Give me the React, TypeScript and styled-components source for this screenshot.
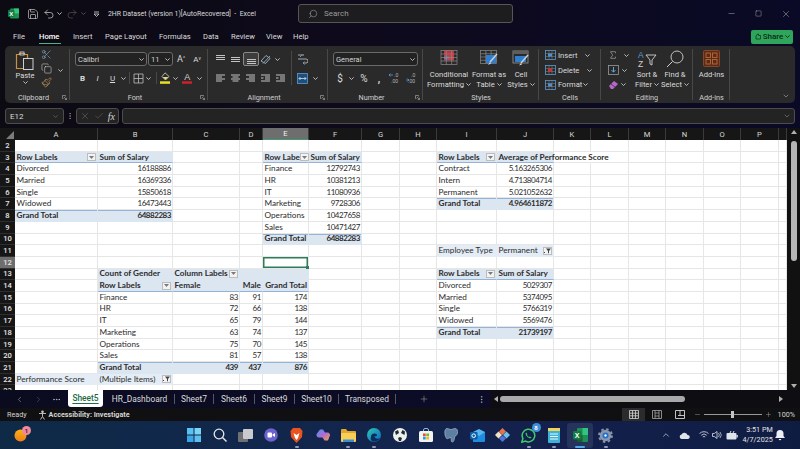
import React from "react";
import styled, { createGlobalStyle } from "styled-components";
import { Save, Undo2, Redo2, Search, X, Check, Scissors, Copy, Paintbrush, Sigma, ChevronDown, ChevronUp, ChevronLeft, ChevronRight, MoreHorizontal, MoreVertical, Plus, Minus, Square } from "lucide-react";

const Global = createGlobalStyle`
  html, body { margin: 0; padding: 0; background: #0b0a18; }
  #root { width: 800px; height: 449px; overflow: hidden; }
  * { box-sizing: border-box; }
`;

const UI = `Roboto, "Noto Sans", sans-serif`;
const INK = "#dcdcdc";

const Page = styled.div`
  width: 800px; height: 449px; display: flex; flex-direction: column; overflow: hidden;
  font-family: ${UI}; color: ${INK};
  background: linear-gradient(90deg, #0c0a12 0%, #0e0a1c 45%, #0a0a26 100%);
`;

/* ---------- shared small parts ---------- */
const Tool = styled.span<{ $w: number; $ml?: number; $active?: boolean }>`
  width: ${p => p.$w}px; flex: none; height: 14px; display: inline-flex; align-items: center; justify-content: center;
  margin-left: ${p => p.$ml ?? 0}px; white-space: nowrap; font-size: 9px;
  ${p => p.$active ? "background:#3d3d3d; border:1px solid #8a8a8a; border-radius:2px;" : ""}
`;
const Chev = ({ c = "#c8c8c8" }: { c?: string }) => (
  <svg width="5" height="3" viewBox="0 0 5 3"><path d="M.4.4 2.5 2.5 4.6.4" fill="none" stroke={c} strokeWidth=".9" /></svg>
);

/* ---------- title bar ---------- */
const TitleBar = styled.div`height: 27px; flex: none; display: flex; align-items: center; padding-left: 8px;`;
const TitleText = styled.div`width: 190px; margin-left: 5px; font-size: 6.9px; flex: none; color: #dadada; white-space: pre;`;
const SearchBox = styled.div`
  width: 215px; height: 19px; flex: none; display: flex; align-items: center; gap: 6px; padding-left: 9px;
  background: #1d1c1f; border: 1px solid #565656; border-radius: 3px; font-size: 8px; color: #9b9b9b;
`;
const WinBtns = styled.div`margin-left: auto; display: flex; padding-right: .5px; height: 14px;`;

/* ---------- tab strip ---------- */
const TabStrip = styled.div`height: 19px; flex: none; display: flex; align-items: center; padding: 0 7px 0 13px; font-size: 7.6px; color: #dcdcdc;`;
const MenuTab = styled.span<{ $w: number; $on?: boolean }>`
  width: ${p => p.$w}px; flex: none; position: relative; white-space: nowrap;
  ${p => p.$on ? `font-weight:500; color:#fff; &::after{content:""; position:absolute; left:0; width:22px; bottom:-3px; height:1.5px; background:#4fb286;}` : ""}
`;
const ShareBtn = styled.div`
  margin-left: auto; width: 42px; height: 14px; border-radius: 2px; background: #2ea55b; color: #0b2b16;
  display: flex; align-items: center; justify-content: center; gap: 2px; font-size: 8px; font-weight: 500;
`;

/* ---------- ribbon ---------- */
const Ribbon = styled.div`height: 57px; flex: none; margin: 0 5px; display: flex; background: #2a2a2a; border-radius: 5px; position: relative;`;
const Group = styled.section<{ $w: number }>`
  width: ${p => p.$w}px; flex: none; display: flex; flex-direction: column; position: relative;
  &::after { content: ""; position: absolute; right: 0; top: 3px; bottom: 3px; width: 1px; background: #484848; }
`;
const GroupMain = styled.div<{ $pl?: number }>`height: 46px; flex: none; display: flex; padding-left: ${p => p.$pl ?? 0}px;`;
const GroupLabel = styled.div<{ $launch?: boolean }>`
  height: 11px; display: grid; grid-template-columns: ${p => p.$launch ? "1fr auto 1fr 8px" : "1fr auto 1fr"}; align-items: center;
  font-size: 7.3px; color: #cfcfcf; white-space: nowrap;
`;
const Launcher = styled.span`display: inline-flex;`;
const Rows = styled.div`padding-top: 6px; display: flex; flex-direction: column; gap: 5px;`;
const Row = styled.div`display: flex; align-items: center; height: 14px;`;
const Combo = styled.div<{ $w: number; $ml?: number }>`
  width: ${p => p.$w}px; height: 14px; flex: none; margin-left: ${p => p.$ml ?? 0}px; border: 1px solid #6a6a6a; border-radius: 3px;
  background: #222; display: flex; align-items: center; justify-content: space-between; padding: 0 2px; font-size: 7.5px; color: #d4d4d4;
`;
const PasteCol = styled.div`width: 30px; flex: none; display: flex; flex-direction: column; align-items: center; padding: 5px 0 0 0; font-size: 7.5px; line-height: 9px; gap: 1px;`;
const SmallCol = styled.div`width: 12px; flex: none; display: flex; flex-direction: column; align-items: center; padding-top: 3px; gap: 3px;`;
const VRule = styled.div`width: 1px; height: 34px; margin-top: 5px; background: #484848; flex: none;`;
const MiniRule = styled(VRule)`height: 12px; margin: 0 2.5px;`;
const BigBtn = styled.div<{ $w: number }>`
  width: ${p => p.$w}px; flex: none; display: flex; flex-direction: column; align-items: center; padding-top: 4px;
  font-size: 7.6px; line-height: 9.5px; color: #dadada; white-space: nowrap;
`;
const BigIcon = styled.div`height: 20px; display: flex; align-items: flex-start; justify-content: center;`;
const BigLine = styled.span`display: inline-flex; align-items: center; gap: 2px;`;
const StackRows = styled.div`padding-top: 2px; display: flex; flex-direction: column;`;
const StackRow = styled.div<{ $w: number }>`
  height: 15px; width: ${p => p.$w}px; display: flex; align-items: center; font-size: 7.6px; color: #dadada; white-space: nowrap;
`;
const StackText = styled.span<{ $w: number }>`margin-left: 2px; width: ${p => p.$w}px; flex: none;`;
const Collapse = styled.div`margin: auto 5px 3px auto; display: flex;`;

/* ---------- formula bar ---------- */
const FormulaBar = styled.div`height: 16px; flex: none; margin: 5px 5px 4px; display: flex; align-items: stretch;`;
const NameBox = styled.div`
  width: 59px; flex: none; background: #232323; border: 1px solid #4c4c4c; border-radius: 3px; display: flex; align-items: center; justify-content: space-between;
  padding: 0 4px; font-size: 8px; color: #dcdcdc;
`;
const Dots = styled.div`width: 12px; flex: none; display: flex; align-items: center; justify-content: center;`;
const FxBox = styled.div`
  width: 43px; flex: none; background: #232323; border: 1px solid #4c4c4c; border-radius: 3px; display: flex; align-items: center; justify-content: space-around; padding: 0 1px;
`;
const FxLabel = styled.span`font-family: "Liberation Serif", serif; font-style: italic; font-size: 10px; color: #d8d8d8;`;
const FormulaInput = styled.div`
  flex: 1; margin-left: 3px; background: #232323; border: 1px solid #4c4c4c; border-radius: 3px; display: flex; align-items: center; justify-content: flex-end; padding-right: 3px;
`;

/* ---------- sheet ---------- */
const SheetArea = styled.div`height: 262px; flex: none; display: flex;`;
const Grid = styled.div`
  width: 787px; height: 262px; overflow: hidden; flex: none; background: #fff; display: grid;
  grid-template-columns: 15px 83px 75px 67px 23px 46px 53px 38px 37px 60px 57px 37px 38px 37px 38px 37px 38px 8px;
  grid-auto-rows: 11.7px; grid-template-rows: 12px;
  font-family: Lato, "Liberation Sans", sans-serif; font-size: 8.2px; line-height: 11px;
`;
const Corner = styled.div`
  background: #161616; position: relative;
  &::after { content: ""; position: absolute; right: 1px; bottom: 1px; width: 8px; height: 8px; background: #7c7c7c; clip-path: polygon(100% 0, 100% 100%, 0 100%); }
`;
const ColHead = styled.div<{ $on?: boolean }>`
  background: ${p => p.$on ? "#6e6e6e" : "#161616"}; color: ${p => p.$on ? "#f0f0f0" : "#d6d6d6"};
  border-right: 1px solid #3a3a3a; ${p => p.$on ? "border-bottom: 1.5px solid #3f9a6e;" : ""}
  display: flex; align-items: center; justify-content: center; font-family: ${UI}; font-size: 7.6px;
`;
const RowHead = styled.div<{ $on?: boolean }>`
  background: ${p => p.$on ? "#6e6e6e" : "#161616"}; color: #e6e6e6; border-bottom: 1px solid #2e2e2e;
  display: flex; align-items: center; justify-content: center; font-family: ${UI}; font-size: 7.6px; font-weight: 500;
`;
const Cell = styled.div<{ $fill?: string; $bold?: boolean; $right?: boolean; $top?: boolean; $bottom?: boolean; $sel?: boolean; $open?: boolean; $num?: boolean }>`
  position: relative; white-space: nowrap; display: flex; align-items: center; padding: 0 1px 0 1.5px; color: #2c2c2c;
  justify-content: ${p => p.$right ? "flex-end" : "space-between"};
  font-weight: ${p => p.$bold ? 700 : 400};
  background: ${p => p.$fill ?? "transparent"};
  border-right: 1px solid ${p => p.$fill ? p.$fill : p.$open ? "transparent" : "#e6e6e6"};
  border-bottom: 1px solid ${p => p.$bottom ? "#95b3d7" : p.$fill ? p.$fill : "#e6e6e6"};
  ${p => p.$num ? "font-size: 8px; letter-spacing: -.45px;" : ""}
  ${p => p.$top ? "box-shadow: inset 0 1px 0 #95b3d7;" : ""}
  ${p => p.$sel ? `box-shadow: inset 0 0 0 1.5px #2f7d58; z-index: 2;
    &::after { content: ""; position: absolute; right: -1px; bottom: -1px; width: 3px; height: 3px; background: #2f7d58; }` : ""}
`;
const PivotBtn = styled.span`
  flex: none; width: 9px; height: 8px; background: #f3f3f3; border: 1px solid #bdbdbd; display: inline-flex; align-items: center; justify-content: center;
`;
const VScroll = styled.div`width: 13px; flex: none; background: #111; display: flex; flex-direction: column; align-items: center; padding: 2px 0 2px;`;
const VThumb = styled.div`width: 6px; height: 120px; margin-top: 7px; border-radius: 3px; background: #b5b5b5;`;
const Arrow = styled.span<{ $dir: "up" | "down" | "left" | "right" }>`
  flex: none; width: 0; height: 0; display: block;
  ${p => p.$dir === "up" ? "border-left:3px solid transparent;border-right:3px solid transparent;border-bottom:4px solid #b0b0b0;" : ""}
  ${p => p.$dir === "down" ? "border-left:3px solid transparent;border-right:3px solid transparent;border-top:4px solid #b0b0b0;margin-top:auto;" : ""}
  ${p => p.$dir === "left" ? "border-top:3px solid transparent;border-bottom:3px solid transparent;border-right:4px solid #b0b0b0;" : ""}
  ${p => p.$dir === "right" ? "border-top:3px solid transparent;border-bottom:3px solid transparent;border-left:4px solid #b0b0b0;margin-left:auto;margin-right:2px;" : ""}
`;

/* ---------- sheet tabs ---------- */
const SheetTabs = styled.div`height: 18px; flex: none; display: flex; align-items: center; background: linear-gradient(90deg, #0b0b20, #0c0c2a); font-size: 8.4px; color: #dcdcdc;`;
const SheetTab = styled.div<{ $w: number; $on?: boolean }>`
  width: ${p => p.$w}px; flex: none; height: ${p => p.$on ? 17 : 10}px; display: flex; align-items: center; justify-content: center; white-space: nowrap;
  ${p => p.$on
    ? `align-self:flex-start; background:#fff; color:#1e6b46; font-weight:500; border-radius:0 0 3px 3px; padding-bottom:1px; text-decoration: underline; text-underline-offset: 2px;`
    : `border-right:1px solid #55566a;`}
`;
const HScroll = styled.div`
  margin-left: 4px; flex: none; width: 295px; height: 18px; display: flex; align-items: center; background: #0e0e12; padding: 0 1px 0 3px;
`;
const HThumb = styled.div`width: 185px; height: 6px; border-radius: 3px; background: #a9a9a9; margin-left: 2px;`;
const ScrollEnd = styled.div`flex: 1; align-self: stretch; background: #0e0e12;`;

/* ---------- status bar ---------- */
const StatusBar = styled.div`height: 13px; flex: none; background: #101012; display: flex; align-items: center; font-size: 7.2px; color: #d4d4d4; padding: 0 5px 0 7px; white-space: nowrap;`;
const Access = styled.span`display: inline-flex; align-items: center; gap: 2px; margin-left: 11px; font-weight: 700;`;
const ViewBtn = styled.div<{ $on?: boolean; $first?: boolean }>`
  width: 23px; height: 13px; flex: none; display: flex; align-items: center; justify-content: center; ${p => p.$on ? "background:#2b2b2b;" : ""}
  ${p => p.$first ? "margin-left: auto;" : ""}
`;
const ZoomRow = styled.div`display: flex; align-items: center; margin-left: 2.5px;`;
const SliderTrack = styled.div`width: 58px; height: 1px; margin: 0 3px; background: #9a9a9a; display: flex; align-items: center; justify-content: center;`;
const SliderThumb = styled.div`width: 3px; height: 7px; background: #c4c4c4;`;
const ZoomPct = styled.span`margin-left: 6px;`;

/* ---------- taskbar ---------- */
const Taskbar = styled.div`
  height: 28px; flex: none; display: flex; align-items: center;
  background: linear-gradient(90deg, #0e2a47 0%, #13254d 45%, #13204c 70%, #0f1c42 100%);
`;
const Weather = styled.div`width: 181px; flex: none; display: flex; justify-content: flex-start; padding-left: 12px;`;
const TaskGroup = styled.div`display: flex;`;
const TaskItem = styled.div<{ $run?: boolean; $on?: boolean; $w?: number }>`
  width: ${p => p.$w ?? 25.75}px; height: 25px; flex: none; position: relative; display: flex; align-items: center; justify-content: center; border-radius: 3px;
  ${p => p.$on ? "background:#26345c;" : ""}
  ${p => p.$run ? `&::after{content:""; position:absolute; left:50%; margin-left:-2px; bottom:0; width:4px; height:1.5px; border-radius:1px; background:#8d9ab5;}` : ""}
  ${p => p.$on ? `&::after{content:""; position:absolute; left:50%; margin-left:-5px; bottom:0; width:10px; height:2px; border-radius:1px; background:#4ea8e8;}` : ""}
`;
const Badge = styled.span<{ $bg: string; $color: string; $top?: number; $right?: number }>`
  position: absolute; top: ${p => p.$top ?? 0}px; right: ${p => p.$right ?? 1}px; width: 9px; height: 9px; border-radius: 50%; background: ${p => p.$bg}; color: ${p => p.$color};
  font-size: 6px; line-height: 9px; text-align: center; font-weight: 700;
`;
const Tray = styled.div`margin-left: 39px; display: flex; align-items: center;`;
const Clock = styled.div`width: 32px; margin-left: 1px; text-align: right; font-size: 7.2px; line-height: 10px; color: #e4e4e4; flex: none; white-space: nowrap;`;

/* ---------- drawings ---------- */
const L = "#d4d4d4";
const ExcelLogo = () => (
  <svg width="11" height="11" viewBox="0 0 11 11" style={{ flex: "none" }}>
    <rect x="2" y=".5" width="9" height="10" rx="1" fill="#1e8f55" />
    <rect x="6" y=".5" width="5" height="5" fill="#33c481" />
    <rect y="2" width="6.5" height="7" rx="1" fill="#107c41" />
    <text x="3.2" y="7.6" fontSize="6" fontWeight="700" fill="#fff" textAnchor="middle" fontFamily="Liberation Sans">X</text>
  </svg>
);
const Customize = () => (
  <svg width="7" height="6" viewBox="0 0 7 6"><path d="M1 1h5M1 3h5L3.5 5.5 1 3" fill="none" stroke={L} strokeWidth=".8" /></svg>
);
const LinesIcon = ({ rows }: { rows: [number, number, number][] }) => (
  <svg width="11" height="11" viewBox="0 0 11 11">
    {rows.map(([x1, x2, y], i) => <path key={i} d={`M${x1} ${y}H${x2}`} stroke={L} strokeWidth=".9" />)}
  </svg>
);
const PasteIcon = () => (
  <svg width="20" height="19" viewBox="0 0 20 19">
    <path d="M1.5 3.5h3v-1h5v1h3v14h-11z" fill="none" stroke="#d08f3f" strokeWidth="1.2" />
    <rect x="5" y="1" width="4" height="3" fill="none" stroke="#cdcdcd" strokeWidth=".9" />
    <rect x="8.5" y="7.5" width="9.5" height="11" fill="#2a2a2a" stroke="#cfcfcf" strokeWidth="1" />
  </svg>
);
const BordersIcon = () => (
  <svg width="11" height="11" viewBox="0 0 11 11"><path d="M1 1h9v9H1zM5.5 1v9M1 5.5h9" fill="none" stroke="#bdbdbd" strokeWidth=".8" /></svg>
);
const FillIcon = () => (
  <svg width="11" height="12" viewBox="0 0 11 12">
    <path d="M5 .8 9 4.5 5.5 8 2 4.5z" fill="none" stroke="#d4d4d4" strokeWidth=".8" />
    <path d="M2.5 5h6L5.5 7.7z" fill="#e5d870" />
    <rect y="9.3" width="10" height="2.5" fill="#e6df25" />
  </svg>
);
const FontColorIcon = () => (
  <svg width="11" height="12" viewBox="0 0 11 12">
    <text x="5.2" y="7.8" textAnchor="middle" fontSize="9" fill="#d4d4d4" fontFamily="Liberation Sans">A</text>
    <rect y="9.3" width="10" height="2.5" fill="#d21f2b" />
  </svg>
);
const OrientIcon = () => (
  <svg width="12" height="11" viewBox="0 0 12 11">
    <path d="M1 7 6 1.5l4 3-4.500 5z" fill="none" stroke="#bfbfbf" strokeWidth=".8" />
    <path d="M3 9.500 10 2" stroke="#6fa8dc" strokeWidth="1" />
  </svg>
);
const WrapIcon = () => (
  <svg width="11" height="12" viewBox="0 0 11 12">
    <path d="M1 2h6M1 6h8a2 2 0 0 1 0 4H6" fill="none" stroke="#c9c9c9" strokeWidth=".8" />
    <path d="M5.500 1.500 3 4M6 10l1.500-1.500M6 10l1.500 1.500" fill="none" stroke="#5a9bd5" strokeWidth="1" />
  </svg>
);
const MergeIcon = () => (
  <svg width="11" height="11" viewBox="0 0 11 11">
    <rect x=".5" y=".5" width="10" height="10" fill="#1f4e79" stroke="#5a9bd5" strokeWidth=".8" />
    <path d="M2 5.500h7M2 5.500 3.500 4M2 5.500 3.500 7M9 5.500 7.500 4M9 5.500 7.500 7" fill="none" stroke="#cfe2f3" strokeWidth=".8" />
  </svg>
);
const Decimals = ({ dir }: { dir: number }) => (
  <svg width="12" height="12" viewBox="0 0 12 12">
    <text x="6" y="5" fontSize="5" fill="#bdbdbd" fontFamily="Liberation Sans">.0</text>
    <text x="3" y="11" fontSize="5" fill="#bdbdbd" fontFamily="Liberation Sans">.00</text>
    <path d={dir > 0 ? "M1 3h4M1 3l1.500-1.500M1 3l1.500 1.500" : "M1 8h3M4 8 2.500 6.500M4 8 2.500 9.500"} fill="none" stroke="#5a9bd5" strokeWidth=".8" />
  </svg>
);
const Launch = () => (
  <svg width="5" height="5" viewBox="0 0 5 5"><path d="M.5.5h3v1M.5.500v3h1M2 2l2.400 2.400M4.500 2.800v1.700H2.800" fill="none" stroke="#b5b5b5" strokeWidth=".6" /></svg>
);
const TableGrid = ({ x, y, w, h, c = "#8b8b8b" }: { x: number; y: number; w: number; h: number; c?: string }) => (
  <g fill="none" stroke={c} strokeWidth=".7">
    <rect x={x} y={y} width={w} height={h} />
    <path d={`M${x + w / 3} ${y}v${h}M${x + 2 * w / 3} ${y}v${h}M${x} ${y + h / 4}h${w}M${x} ${y + h / 2}h${w}M${x} ${y + 3 * h / 4}h${w}`} />
  </g>
);
const CondFmtIcon = () => (
  <svg width="18" height="15" viewBox="0 0 18 15">
    <rect x="4" y="0.500" width="10" height="4" fill="#c8333a" />
    <rect x="4" y="4.500" width="10" height="6" fill="#d0393f" />
    <rect x="4" y="6.500" width="5" height="2.500" fill="#3f7fd0" />
    <TableGrid x={1} y={0.5} w={16} h={14} />
  </svg>
);
const FmtTableIcon = () => (
  <svg width="18" height="16" viewBox="0 0 18 16">
    <TableGrid x={.5} y={.5} w={16} h={13} />
    <rect x="6" y="5" width="10" height="8" fill="#2f7fd0" />
    <path d="M17 4 10 12" stroke="#cfcfcf" strokeWidth="1.500" />
    <path d="M10 12l-2 3 3-1.500z" fill="#d9d9d9" />
  </svg>
);
const CellStyleIcon = () => (
  <svg width="18" height="16" viewBox="0 0 18 16">
    <rect x="1" y="1" width="15" height="12" fill="none" stroke="#9a9a9a" strokeWidth=".8" />
    <rect x="1" y="1" width="15" height="3" fill="#5e5e5e" />
    <path d="M3 6h11v6H3z" fill="#2f7fd0" />
    <path d="M16 5 9 13" stroke="#cfcfcf" strokeWidth="1.500" />
    <path d="M9 13l-2 2.500 3-1z" fill="#d9d9d9" />
  </svg>
);
const RowIcon = ({ accent }: { accent: string }) => (
  <svg width="11" height="10" viewBox="0 0 11 10">
    <rect x=".5" y=".5" width="10" height="9" fill="none" stroke="#5a9bd5" strokeWidth=".8" />
    <path d="M.5 3.500h10M.5 6.500h10M4 .5v9M7 .5v9" stroke="#8b8b8b" strokeWidth=".5" />
    <rect x="3" y="3.500" width="4" height="3" fill={accent} />
  </svg>
);
const FillDownIcon = () => (
  <svg width="11" height="10" viewBox="0 0 11 10">
    <rect x=".5" y=".5" width="10" height="9" fill="none" stroke="#9a9a9a" strokeWidth=".8" />
    <path d="M5.500 2v5M3.500 5l2 2.200 2-2.200" fill="none" stroke="#5aa6e0" strokeWidth="1" />
  </svg>
);
const EraserIcon = () => (
  <svg width="11" height="10" viewBox="0 0 11 10">
    <path d="M1 6 6 1l4 3-5 5H3z" fill="#b768c9" />
    <path d="M3 4l4 3" stroke="#2a2a2a" strokeWidth=".7" />
  </svg>
);
const SortIcon = () => (
  <svg width="20" height="18" viewBox="0 0 20 18">
    <text x="1" y="8" fontSize="8.500" fill="#5a9bd5" fontFamily="Liberation Sans">A</text>
    <text x="1" y="17" fontSize="8.500" fill="#d0d0d0" fontFamily="Liberation Sans">Z</text>
    <path d="M9 5h10l-4 5v5l-2-1v-4z" fill="none" stroke="#cfcfcf" strokeWidth=".9" />
  </svg>
);
const FindIcon = () => (
  <svg width="18" height="18" viewBox="0 0 18 18">
    <circle cx="11" cy="7" r="6" fill="none" stroke="#cfcfcf" strokeWidth=".9" />
    <path d="M6.500 11.500 1 17" stroke="#cfcfcf" strokeWidth="1" />
  </svg>
);
const AddinIcon = () => (
  <svg width="17" height="17" viewBox="0 0 17 17">
    <rect x=".5" y=".5" width="16" height="16" rx="1" fill="#5a2c18" stroke="#8a4526" />
    <rect x="3" y="3" width="4.500" height="4.500" fill="none" stroke="#b9683b" strokeWidth=".9" />
    <rect x="9.500" y="3" width="4.500" height="4.500" fill="none" stroke="#b9683b" strokeWidth=".9" />
    <rect x="3" y="9.500" width="4.500" height="4.500" fill="none" stroke="#b9683b" strokeWidth=".9" />
    <rect x="9.500" y="9.500" width="4.500" height="4.500" fill="none" stroke="#b9683b" strokeWidth=".9" />
  </svg>
);
const PivotDrop = () => (
  <PivotBtn><svg width="5" height="3" viewBox="0 0 5 3"><path d="M0 0h5L2.500 3z" fill="#7a7a7a" /></svg></PivotBtn>
);
const PivotFilter = () => (
  <PivotBtn><svg width="7" height="6" viewBox="0 0 7 6"><path d="M2 .5h5L5 3v2.500L4 5V3zM0 4h1v1H0z" fill="#444" /></svg></PivotBtn>
);
const NormalViewIcon = () => (
  <svg width="10" height="9" viewBox="0 0 10 9"><path d="M.5.5h9v8h-9zM.5 3.200h9M.5 5.800h9M3.500.5v8M6.500.5v8" fill="none" stroke="#d6d6d6" strokeWidth=".8" /></svg>
);
const LayoutViewIcon = () => (
  <svg width="10" height="9" viewBox="0 0 10 9"><path d="M.5.5h9v8h-9zM3 .5v8M7 .5v8M3 3h4M3 6h4" fill="none" stroke="#a8a8a8" strokeWidth=".8" /></svg>
);
const BreakViewIcon = () => (
  <svg width="10" height="9" viewBox="0 0 10 9"><path d="M.5.5h9v8h-9zM5 .5v5h4.500M3 5.500h2" fill="none" stroke="#d6d6d6" strokeWidth=".9" /></svg>
);
const AccessIcon = () => (
  <svg width="9" height="10" viewBox="0 0 9 10"><circle cx="4.500" cy="1.800" r="1.300" fill="#c8c8c8" /><path d="M1 3.500h7M4.500 3.500v3M4.500 6.500 2.500 9.500M4.500 6.500l2 3" fill="none" stroke="#c8c8c8" strokeWidth=".9" /></svg>
);

/* taskbar pictures */
const WinIcon = () => (
  <svg width="14" height="14" viewBox="0 0 14 14">
    <rect width="6.500" height="6.500" fill="#58c3f2" /><rect x="7.500" width="6.500" height="6.500" fill="#7ad4f7" />
    <rect y="7.500" width="6.500" height="6.500" fill="#3aa6e6" /><rect x="7.500" y="7.500" width="6.500" height="6.500" fill="#5cc0f0" />
  </svg>
);
const SearchGlass = () => (
  <svg width="14" height="14" viewBox="0 0 14 14"><circle cx="6" cy="6" r="4.800" fill="none" stroke="#e8e8e8" strokeWidth="1.300" /><path d="m9.500 9.500 4 4" stroke="#e8e8e8" strokeWidth="1.400" /></svg>
);
const TaskViewIcon = () => (
  <svg width="15" height="13" viewBox="0 0 15 13"><rect y="3" width="10" height="10" rx="1" fill="#6f7173" /><rect x="5" width="10" height="10" rx="1" fill="#c9cbce" /></svg>
);
const MeetIcon = () => (
  <svg width="14" height="14" viewBox="0 0 14 14"><circle cx="7" cy="7" r="6.800" fill="#6c63cf" /><rect x="3.500" y="4.500" width="4.500" height="5" rx="1" fill="#fff" /><path d="M8.500 6.500 11 5v4L8.500 7.500z" fill="#fff" /></svg>
);
const BraveIcon = () => (
  <svg width="13" height="15" viewBox="0 0 13 15"><path d="M3 0h7l2.500 3L12 9l-5.500 6L1 9 .5 3z" fill="#e8541f" /><path d="M3.500 5 6.500 7 9.500 5 8 10l-1.500 2L5 10z" fill="#fff" /></svg>
);
const CopilotIcon = () => (
  <svg width="14" height="14" viewBox="0 0 14 14">
    <defs><linearGradient id="cpg" x1="0" y1="0" x2="1" y2="1"><stop offset="0" stopColor="#3f9be8" /><stop offset=".5" stopColor="#b06ad8" /><stop offset="1" stopColor="#f2a43c" /></linearGradient></defs>
    <path d="M4 1.500h3l2 3h2.500a2.500 2.500 0 0 1 2 4L12 12.500H8.500l-2-3H3a2.500 2.500 0 0 1-2.200-3.700z" fill="url(#cpg)" />
  </svg>
);
const FolderIcon = () => (
  <svg width="15" height="13" viewBox="0 0 15 13"><path d="M0 1a1 1 0 0 1 1-1h4l1.500 2H14a1 1 0 0 1 1 1v2H0z" fill="#e3a72b" /><rect y="4" width="15" height="9" rx="1" fill="#f8cf56" /><rect x="2" y="10.500" width="11" height="2.500" fill="#3d8fd1" /></svg>
);
const EdgeIcon = () => (
  <svg width="14" height="14" viewBox="0 0 14 14">
    <defs><linearGradient id="edg" x1="0" y1="0" x2="1" y2="1"><stop offset="0" stopColor="#2fc7b0" /><stop offset="1" stopColor="#0a66c2" /></linearGradient></defs>
    <circle cx="7" cy="7" r="7" fill="url(#edg)" /><path d="M4 9a3.500 3 0 0 1 6-2.500c.5 2-2 2.500-2.500 1.500 0 2.500 3 3.500 5.500 2-1 1.500-2.500 3.500-6 3.500-2.500 0-4-2-3-4.500z" fill="#0c2b5e" />
  </svg>
);
const PandaIcon = () => (
  <svg width="14" height="14" viewBox="0 0 14 14"><circle cx="7" cy="7" r="7" fill="#edf0ee" /><path d="M2 3.500 5 2l1 3-3 2zM12 3.500 9.500 2 8 5l3.500 2zM5 10l2-1 2 1-1 3H6z" fill="#1e2b2e" /></svg>
);
const StoreIcon = () => (
  <svg width="14" height="14" viewBox="0 0 14 14"><path d="M4.500 3V2a1.500 1.500 0 0 1 1.500-1.500h2A1.500 1.500 0 0 1 9.500 2v1" fill="none" stroke="#8fb9e0" /><rect y="3" width="14" height="11" rx="1.500" fill="#f2f2f2" /><rect x="4" y="5.500" width="2.700" height="2.700" fill="#e8502a" /><rect x="7.300" y="5.500" width="2.700" height="2.700" fill="#6cbb2c" /><rect x="4" y="8.800" width="2.700" height="2.700" fill="#2b9be8" /><rect x="7.300" y="8.800" width="2.700" height="2.700" fill="#f6b91e" /></svg>
);
const PgIcon = () => (
  <svg width="14" height="15" viewBox="0 0 14 15"><path d="M3 .5c2 0 2.500 1 4 1s2-1 4-1 3 2 2.500 4.500-2 3-2.500 3-.5 6-2.500 6-1-3-1.500-4.500C4 10 3 12 2 9.500.5 7 0 .5 3 .5z" fill="#5d7fa1" stroke="#b9c8d9" strokeWidth=".6" /></svg>
);
const OutlookIcon = () => (
  <svg width="15" height="13" viewBox="0 0 15 13"><path d="M3 3h12v9a1 1 0 0 1-1 1H3z" fill="#1f8ce0" /><path d="M3 3l6 4 6-4-6-3z" fill="#56b6f2" /><rect y="3" width="7.500" height="7.500" rx="1" fill="#0c5ea8" /><circle cx="3.700" cy="6.700" r="1.800" fill="none" stroke="#fff" strokeWidth="1" /></svg>
);
const DiamondsIcon = () => (
  <svg width="15" height="14" viewBox="0 0 15 14"><path d="M7.500 0 11 3.500 7.500 7 4 3.500z" fill="#e8724f" /><path d="M3.500 3.500 7 7l-3.500 3.500L0 7z" fill="#f1e3c2" /><path d="M11.500 3.500 15 7l-3.500 3.500L8 7z" fill="#6cc3ea" /><path d="M7.500 7.500 11 10.500 7.500 14 4 10.500z" fill="#5273d9" /></svg>
);
const WhatsIcon = () => (
  <svg width="15" height="15" viewBox="0 0 15 15"><path d="M.8 14.200 1.900 10.500A6.300 6.300 0 1 1 4.500 13.100z" fill="none" stroke="#3ecb6a" strokeWidth="1.500" /><path d="M5 4.500c-1 1 0 3 1.200 4.200S9.500 10.800 10.500 9.800L9 8.500l-.8.600C7.300 8.700 6.300 7.700 5.900 6.800l.6-.8z" fill="#3ecb6a" /></svg>
);
const NotesIcon = () => (
  <svg width="12" height="15" viewBox="0 0 12 15"><rect y="1" width="12" height="14" rx="1" fill="#3fb2d8" /><rect x="0" y="0" width="12" height="3" fill="#f1d45a" /><path d="M2 6h8M2 8.500h8M2 11h8" stroke="#e9f7fb" /></svg>
);
const ExcelBig = () => (
  <svg width="15" height="14" viewBox="0 0 15 14"><rect x="4" width="11" height="14" rx="1" fill="#1e8f55" /><rect x="9.500" width="5.500" height="7" fill="#33c481" /><rect x="4" y="7" width="5.500" height="7" fill="#185c37" /><rect y="3" width="8.500" height="8.500" rx="1" fill="#107c41" /><text x="4.200" y="9.500" fontSize="7" textAnchor="middle" fontWeight="700" fill="#fff" fontFamily="Liberation Sans">X</text></svg>
);
const GearIcon = () => (
  <svg width="15" height="15" viewBox="0 0 15 15"><circle cx="7.500" cy="7.500" r="5.800" fill="#8b97ab" /><circle cx="7.500" cy="7.500" r="6.500" fill="none" stroke="#8b97ab" strokeWidth="1.800" strokeDasharray="2.500 2.600" /><circle cx="7.500" cy="7.500" r="3" fill="#1f6fd0" /><circle cx="7.500" cy="7.500" r="1.200" fill="#f0f4fa" /></svg>
);
const WeatherIcon = () => (
  <svg width="13" height="13" viewBox="0 0 13 13">
    <defs><linearGradient id="wt" x1="0" y1="0" x2="0" y2="1"><stop offset="0" stopColor="#f8b415" /><stop offset="1" stopColor="#ee7d1a" /></linearGradient></defs>
    <circle cx="6.500" cy="6.500" r="6" fill="url(#wt)" />
  </svg>
);
const CloudIcon = () => (
  <svg width="11" height="7" viewBox="0 0 11 7"><path d="M2.500 7a2.300 2.300 0 0 1 0-4.500A3.200 3.200 0 0 1 8.500 3 2 2 0 0 1 9 7z" fill="#dfe3ea" /></svg>
);
const WifiIcon = () => (
  <svg width="10" height="8" viewBox="0 0 10 8"><path d="M.5 2.500a6.500 6.500 0 0 1 9 0M2.200 4.300a4 4 0 0 1 5.600 0M3.800 6a1.700 1.700 0 0 1 2.400 0" fill="none" stroke="#dfe3ea" strokeWidth=".8" /></svg>
);
const SpeakerIcon = () => (
  <svg width="10" height="8" viewBox="0 0 10 8"><path d="M.5 2.500h1.800L5 .5v7L2.300 5.500H.5z" fill="none" stroke="#dfe3ea" strokeWidth=".8" /><path d="M6.500 2a3 3 0 0 1 0 4M8 1a4.500 4.500 0 0 1 0 6" fill="none" stroke="#dfe3ea" strokeWidth=".7" /></svg>
);
const BatteryIcon = () => (
  <svg width="12" height="9" viewBox="0 0 12 9"><rect x=".5" y="2" width="10" height="6.500" rx="1" fill="#dfe3ea" /><rect x="10.500" y="4" width="1.300" height="2.500" fill="#dfe3ea" /><path d="M4 2 5 0M7 2 8 0" stroke="#dfe3ea" /></svg>
);
const BellIcon = () => (
  <svg width="10" height="11" viewBox="0 0 10 11"><path d="M5 0a3.500 3.500 0 0 1 3.500 3.500V6L10 8H0l1.500-2V3.500A3.500 3.500 0 0 1 5 0zM3.700 9h2.600A1.300 1.300 0 0 1 3.700 9z" fill="#eceff4" /></svg>
);

/* ---------- sheet data ---------- */
type Def = { t?: string; fill?: string; bold?: boolean; right?: boolean; top?: boolean; bottom?: boolean; btn?: "drop" | "filter"; sel?: boolean; open?: boolean };
const HEAD = "#dce6f1";
const LIGHT = "#e4ecf5";
const cells: Record<string, Def> = {};
const header = (k: string, t = "", btn?: "drop") => { cells[k] = { t, fill: HEAD, bold: true, bottom: true, btn }; };
const total = (k: string, t: string, right = false) => { cells[k] = { t, fill: HEAD, bold: true, top: true, right }; };
const label = (k: string, t: string) => { cells[k] = { t }; };
const num = (k: string, t: string) => { cells[k] = { t, right: true }; };
const fillTable = (lc: string, vc: string, from: number, rows: [string, string][]) =>
  rows.forEach(([a, b], i) => { label(`${lc}${from + i}`, a); num(`${vc}${from + i}`, b); });

header("A3", "Row Labels", "drop"); header("B3", "Sum of Salary");
fillTable("A", "B", 4, [["Divorced", "16188886"], ["Married", "16369336"], ["Single", "15850618"], ["Widowed", "16473443"]]);
total("A8", "Grand Total"); total("B8", "64882283", true);

header("E3", "Row Labe", "drop"); header("F3", "Sum of Salary");
fillTable("E", "F", 4, [["Finance", "12792743"], ["HR", "10381213"], ["IT", "11080936"], ["Marketing", "9728306"], ["Operations", "10427658"], ["Sales", "10471427"]]);
total("E10", "Grand Total"); total("F10", "64882283", true);

header("I3", "Row Labels", "drop"); header("J3", "Average of Performance Score");
fillTable("I", "J", 4, [["Contract", "5.163265306"], ["Intern", "4.713804714"], ["Permanent", "5.021052632"]]);
total("I7", "Grand Total"); total("J7", "4.964611872", true);
cells.K3 = { open: true };
cells.I11 = { t: "Employee Type", fill: LIGHT };
cells.J11 = { t: "Permanent", fill: LIGHT, btn: "filter" };

header("I13", "Row Labels", "drop"); header("J13", "Sum of Salary");
fillTable("I", "J", 14, [["Divorced", "5029307"], ["Married", "5374095"], ["Single", "5766319"], ["Widowed", "5569476"]]);
total("I18", "Grand Total"); total("J18", "21739197", true);

cells.B13 = { t: "Count of Gender", fill: HEAD, bold: true };
cells.C13 = { t: "Column Labels", fill: HEAD, bold: true, btn: "drop" };
cells.D13 = { fill: HEAD }; cells.E13 = { fill: HEAD };
header("B14", "Row Labels", "drop"); header("C14", "Female");
cells.D14 = { t: "Male", fill: HEAD, bold: true, bottom: true, right: true };
cells.E14 = { t: "Grand Total", fill: HEAD, bold: true, bottom: true, right: true };
([["Finance", "83", "91", "174"], ["HR", "72", "66", "138"], ["IT", "65", "79", "144"], ["Marketing", "63", "74", "137"], ["Operations", "75", "70", "145"], ["Sales", "81", "57", "138"]] as string[][])
  .forEach((r, i) => { const n = 15 + i; label(`B${n}`, r[0]); num(`C${n}`, r[1]); num(`D${n}`, r[2]); num(`E${n}`, r[3]); });
total("B21", "Grand Total"); total("C21", "439", true); total("D21", "437", true); total("E21", "876", true);
cells.A22 = { t: "Performance Score", fill: LIGHT };
cells.B22 = { t: "(Multiple Items)", fill: LIGHT, btn: "filter" };
cells.E12 = { sel: true };

const COLS = "ABCDEFGHIJKLMNOPQ".split("");
const ROWS = Array.from({ length: 22 }, (_, i) => i + 2);
const TABS: [string, number][] = [["HR_Dashboard", 70], ["Sheet7", 39], ["Sheet6", 41], ["Sheet9", 40], ["Sheet10", 44], ["Transposed", 57]];
const MENUS: [string, number, boolean?][] = [["File", 26], ["Home", 34, true], ["Insert", 32], ["Page Layout", 54], ["Formulas", 44], ["Data", 28], ["Review", 35], ["View", 27], ["Help", 20]];

const GroupFoot = ({ text, launch }: { text: string; launch?: boolean }) => (
  <GroupLabel $launch={launch}><span />{text}<span />{launch && <Launcher><Launch /></Launcher>}</GroupLabel>
);

export default function App() {
  return (
    <Page>
      <Global />
      <TitleBar>
        <ExcelLogo />
        <Tool $w={14} $ml={7}><Save size={12} strokeWidth={1.3} color={L} /></Tool>
        <Tool $w={15} $ml={1}><Undo2 size={12} strokeWidth={1.4} color={L} /></Tool>
        <Tool $w={6}><Chev /></Tool>
        <Tool $w={16} $ml={2}><Redo2 size={12} strokeWidth={1.4} color="#555" /></Tool>
        <Tool $w={6}><Chev c="#555" /></Tool>
        <Tool $w={14} $ml={3}><Customize /></Tool>
        <TitleText>2HR Dataset (version 1)[AutoRecovered]  -  Excel</TitleText>
        <SearchBox><Search size={10} strokeWidth={1.3} color="#aaa" style={{ transform: "scaleX(-1)" }} />Search</SearchBox>
        <WinBtns>
          <Tool $w={27}><Minus size={9} strokeWidth={1} color="#ddd" /></Tool>
          <Tool $w={27}><Square size={7} strokeWidth={1.2} color="#ddd" /></Tool>
          <Tool $w={28}><X size={10} strokeWidth={1} color="#ddd" /></Tool>
        </WinBtns>
      </TitleBar>

      <TabStrip>
        {MENUS.map(([t, w, on]) => <MenuTab key={t} $w={w} $on={on}>{t}</MenuTab>)}
        <ShareBtn>
          <svg width="7" height="7" viewBox="0 0 7 7"><path d="M2 5.500V3l1.500-2h1v1.500h2V6H2z" fill="none" stroke="#0b2b16" strokeWidth=".7" /></svg>
          Share <Chev c="#0b2b16" />
        </ShareBtn>
      </TabStrip>

      <Ribbon>
        <Group $w={65}>
          <GroupMain $pl={5}>
            <PasteCol><PasteIcon />Paste<Chev /></PasteCol>
            <SmallCol>
              <Scissors size={11} strokeWidth={1.2} color="#8fb6dc" />
              <Copy size={11} strokeWidth={1.2} color={L} />
              <Paintbrush size={11} strokeWidth={1.2} color="#e0b163" />
            </SmallCol>
            <Tool $w={10} $ml={3} style={{ marginTop: 17 }}><Chev /></Tool>
          </GroupMain>
          <GroupFoot text="Clipboard" launch />
        </Group>

        <Group $w={138}>
          <GroupMain $pl={5}>
            <Rows>
              <Row>
                <Combo $w={72}>Calibri<Chev /></Combo>
                <Combo $w={25} $ml={1}>11<Chev /></Combo>
                <Tool $w={16}>A<sup style={{ fontSize: 5, marginTop: -3 }}>^</sup></Tool>
                <Tool $w={16} style={{ fontSize: 8 }}>A<sup style={{ fontSize: 5, marginTop: -3 }}>v</sup></Tool>
              </Row>
              <Row>
                <Tool $w={15} style={{ fontWeight: 700, fontSize: 8 }}>B</Tool>
                <Tool $w={15} style={{ fontStyle: "italic", fontSize: 8 }}>I</Tool>
                <Tool $w={15} style={{ textDecoration: "underline", fontSize: 8 }}>U</Tool>
                <Tool $w={6}><Chev /></Tool>
                <MiniRule />
                <Tool $w={12}><BordersIcon /></Tool>
                <Tool $w={9}><Chev /></Tool>
                <MiniRule />
                <Tool $w={12}><FillIcon /></Tool>
                <Tool $w={9}><Chev /></Tool>
                <Tool $w={14}><FontColorIcon /></Tool>
                <Tool $w={10}><Chev /></Tool>
              </Row>
            </Rows>
          </GroupMain>
          <GroupFoot text="Font" launch />
        </Group>

        <Group $w={120}>
          <GroupMain $pl={5}>
            <Rows style={{ width: 78 }}>
              <Row>
                <Tool $w={15}><LinesIcon rows={[[1, 10, 1.5], [1, 10, 3.5], [1, 10, 5.5]]} /></Tool>
                <Tool $w={15}><LinesIcon rows={[[1, 10, 3.5], [1, 10, 5.5], [1, 10, 7.5]]} /></Tool>
                <Tool $w={16} $active><LinesIcon rows={[[1, 10, 5.5], [1, 10, 7.5], [1, 10, 9.5]]} /></Tool>
                <Tool $w={14}><OrientIcon /></Tool>
                <Tool $w={9}><Chev /></Tool>
              </Row>
              <Row>
                <Tool $w={15}><LinesIcon rows={[[1, 10, 2], [1, 7, 4], [1, 10, 6], [1, 7, 8]]} /></Tool>
                <Tool $w={15}><LinesIcon rows={[[1, 10, 2], [2.5, 8.5, 4], [1, 10, 6], [2.5, 8.5, 8]]} /></Tool>
                <Tool $w={15}><LinesIcon rows={[[1, 10, 2], [4, 10, 4], [1, 10, 6], [4, 10, 8]]} /></Tool>
                <Tool $w={15}><LinesIcon rows={[[1, 10, 2], [5, 10, 4], [5, 10, 6], [1, 10, 8], [1, 3.500, 5]]} /></Tool>
                <Tool $w={15}><LinesIcon rows={[[1, 10, 2], [5, 10, 4], [5, 10, 6], [1, 10, 8], [1, 3.500, 5]]} /></Tool>
              </Row>
            </Rows>
            <VRule />
            <Rows style={{ paddingLeft: 3 }}>
              <Row><Tool $w={15}><WrapIcon /></Tool></Row>
              <Row><Tool $w={15}><MergeIcon /></Tool><Tool $w={11}><Chev /></Tool></Row>
            </Rows>
          </GroupMain>
          <GroupFoot text="Alignment" launch />
        </Group>

        <Group $w={95}>
          <GroupMain $pl={5}>
            <Rows>
              <Row><Combo $w={85}>General<Chev /></Combo></Row>
              <Row>
                <Tool $w={14} style={{ fontSize: 10 }}>$</Tool>
                <Tool $w={8}><Chev /></Tool>
                <Tool $w={18} style={{ fontSize: 10 }}>%</Tool>
                <Tool $w={12} style={{ fontSize: 10, fontWeight: 700 }}>,</Tool>
                <Tool $w={18}><Decimals dir={1} /></Tool>
                <Tool $w={15}><Decimals dir={-1} /></Tool>
              </Row>
            </Rows>
          </GroupMain>
          <GroupFoot text="Number" launch />
        </Group>

        <Group $w={116}>
          <GroupMain>
            <BigBtn $w={52}><BigIcon><CondFmtIcon /></BigIcon>Conditional<BigLine>Formatting <Chev /></BigLine></BigBtn>
            <BigBtn $w={28}><BigIcon><FmtTableIcon /></BigIcon>Format as<BigLine>Table <Chev /></BigLine></BigBtn>
            <BigBtn $w={36}><BigIcon><CellStyleIcon /></BigIcon>Cell<BigLine>Styles <Chev /></BigLine></BigBtn>
          </GroupMain>
          <GroupFoot text="Styles" />
        </Group>

        <Group $w={62}>
          <GroupMain $pl={6}>
            <StackRows>
              <StackRow $w={50}><RowIcon accent="#4f8fd0" /><StackText $w={26}>Insert</StackText><Tool $w={6}><Chev /></Tool></StackRow>
              <StackRow $w={50}><RowIcon accent="#c8333a" /><StackText $w={28}>Delete</StackText><Tool $w={6}><Chev /></Tool></StackRow>
              <StackRow $w={50}><RowIcon accent="#4f8fd0" /><StackText $w={24}>Format</StackText><Tool $w={6}><Chev /></Tool></StackRow>
            </StackRows>
          </GroupMain>
          <GroupFoot text="Cells" />
        </Group>

        <Group $w={92}>
          <GroupMain $pl={7}>
            <StackRows style={{ width: 23 }}>
              <StackRow $w={23}><Sigma size={10} strokeWidth={1.2} color={L} /><Tool $w={8} $ml={4}><Chev /></Tool></StackRow>
              <StackRow $w={23}><FillDownIcon /><Tool $w={8} $ml={1}><Chev /></Tool></StackRow>
              <StackRow $w={23}><EraserIcon /><Tool $w={8}><Chev /></Tool></StackRow>
            </StackRows>
            <BigBtn $w={32}><BigIcon><SortIcon /></BigIcon>Sort &amp;<BigLine>Filter <Chev /></BigLine></BigBtn>
            <BigBtn $w={24}><BigIcon><FindIcon /></BigIcon>Find &amp;<BigLine>Select <Chev /></BigLine></BigBtn>
          </GroupMain>
          <GroupFoot text="Editing" />
        </Group>

        <Group $w={37}>
          <GroupMain>
            <BigBtn $w={37}><BigIcon><AddinIcon /></BigIcon>Add-ins</BigBtn>
          </GroupMain>
          <GroupFoot text="Add-ins" />
        </Group>

        <Collapse><ChevronDown size={8} strokeWidth={1.4} color="#cfcfcf" /></Collapse>
      </Ribbon>

      <FormulaBar>
        <NameBox>E12<ChevronDown size={7} strokeWidth={1.2} color="#bbb" /></NameBox>
        <Dots><MoreVertical size={8} strokeWidth={1.4} color="#bbb" /></Dots>
        <FxBox>
          <X size={10} strokeWidth={1.1} color="#7c7c7c" />
          <Check size={10} strokeWidth={1.1} color="#7c7c7c" />
          <FxLabel>fx</FxLabel>
        </FxBox>
        <FormulaInput><ChevronDown size={8} strokeWidth={1.2} color="#bbb" /></FormulaInput>
      </FormulaBar>

      <SheetArea>
        <Grid>
          <Corner />
          {COLS.map(c => <ColHead key={c} $on={c === "E"}>{c === "Q" ? "" : c}</ColHead>)}
          {ROWS.map(r => (
            <React.Fragment key={r}>
              <RowHead $on={r === 12}>{r}</RowHead>
              {COLS.map(c => {
                const d = cells[`${c}${r}`] ?? {};
                return (
                  <Cell key={c} $fill={d.fill} $bold={d.bold} $right={d.right} $top={d.top} $bottom={d.bottom} $sel={d.sel} $open={d.open} $num={!!d.t && /^[\d.]+$/.test(d.t)}>
                    {d.t && <span>{d.t}</span>}
                    {d.btn === "drop" && <PivotDrop />}
                    {d.btn === "filter" && <PivotFilter />}
                  </Cell>
                );
              })}
            </React.Fragment>
          ))}
        </Grid>
        <VScroll>
          <Arrow $dir="up" />
          <VThumb />
          <Arrow $dir="down" />
        </VScroll>
      </SheetArea>

      <SheetTabs>
        <Tool $w={10} $ml={14}><ChevronLeft size={9} strokeWidth={1.2} color="#ccc" /></Tool>
        <Tool $w={10} $ml={9}><ChevronRight size={9} strokeWidth={1.2} color="#777" /></Tool>
        <Tool $w={10} $ml={8}><MoreHorizontal size={9} strokeWidth={1.6} color="#ccc" /></Tool>
        <Tool $w={7} />
        <SheetTab $w={35} $on>Sheet5</SheetTab>
        <Tool $w={2} />
        {TABS.map(([t, w]) => <SheetTab key={t} $w={w}>{t}</SheetTab>)}
        <Tool $w={56}><Plus size={10} strokeWidth={1} color="#ccc" /></Tool>
        <Tool $w={12} $ml={23}><MoreVertical size={9} strokeWidth={1.4} color="#ccc" /></Tool>
        <HScroll>
          <Arrow $dir="left" />
          <HThumb />
          <Arrow $dir="right" />
        </HScroll>
        <ScrollEnd />
      </SheetTabs>

      <StatusBar>
        Ready
        <Access><AccessIcon />Accessibility: Investigate</Access>
        <ViewBtn $on $first><NormalViewIcon /></ViewBtn>
        <ViewBtn><LayoutViewIcon /></ViewBtn>
        <ViewBtn><BreakViewIcon /></ViewBtn>
        <ZoomRow>
          <Minus size={7} strokeWidth={1.2} color="#ccc" />
          <SliderTrack><SliderThumb /></SliderTrack>
          <Plus size={7} strokeWidth={1.2} color="#ccc" />
          <ZoomPct>100%</ZoomPct>
        </ZoomRow>
      </StatusBar>

      <Taskbar>
        <Weather>
          <TaskItem $w={16}><WeatherIcon /><Badge $bg="#f08a9c" $color="#5a1020" $top={3} $right={-3}>1</Badge></TaskItem>
        </Weather>
        <TaskGroup>
          <TaskItem><WinIcon /></TaskItem>
          <TaskItem><SearchGlass /></TaskItem>
          <TaskItem><TaskViewIcon /></TaskItem>
          <TaskItem><MeetIcon /></TaskItem>
          <TaskItem $run><BraveIcon /></TaskItem>
          <TaskItem><CopilotIcon /></TaskItem>
          <TaskItem $run><FolderIcon /></TaskItem>
          <TaskItem $run><EdgeIcon /></TaskItem>
          <TaskItem><PandaIcon /></TaskItem>
          <TaskItem><StoreIcon /></TaskItem>
          <TaskItem><PgIcon /></TaskItem>
          <TaskItem><OutlookIcon /></TaskItem>
          <TaskItem><DiamondsIcon /></TaskItem>
          <TaskItem $run><WhatsIcon /><Badge $bg="#3f8fd8" $color="#fff">8</Badge></TaskItem>
          <TaskItem $run><NotesIcon /></TaskItem>
          <TaskItem $on><ExcelBig /></TaskItem>
          <TaskItem $run><GearIcon /></TaskItem>
        </TaskGroup>
        <Tray>
          <Tool $w={16}><ChevronUp size={10} strokeWidth={1.5} color="#e8e8e8" /></Tool>
          <Tool $w={20} $ml={1}><CloudIcon /></Tool>
          <Tool $w={14} $ml={2}><WifiIcon /></Tool>
          <Tool $w={12}><SpeakerIcon /></Tool>
          <Tool $w={16} $ml={1}><BatteryIcon /></Tool>
          <Clock>3:51 PM<br />4/7/2025</Clock>
          <Tool $w={14}><BellIcon /></Tool>
        </Tray>
      </Taskbar>
    </Page>
  );
}
